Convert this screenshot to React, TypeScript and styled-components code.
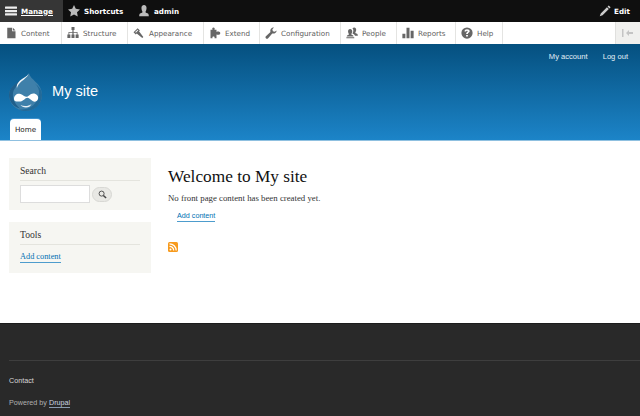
import React from "react";
import styled, { createGlobalStyle } from "styled-components";

const Global = createGlobalStyle`
  html, body { margin: 0; padding: 0; background: #fff; }
  body { width: 640px; height: 416px; overflow: hidden; font-family: "Liberation Sans", Arial, sans-serif; }
  a { text-decoration: none; }
`;

const Page = styled.div`
  width: 640px; height: 416px; display: flex; flex-direction: column; overflow: hidden;
`;

const TopBar = styled.div`
  height: 22px; background: #0f0f0f; display: flex; align-items: stretch; flex: none;
`;
const TopItem = styled.div<{ $active?: boolean; $w: number }>`
  width: ${p => p.$w}px; flex: none; display: flex; align-items: center; gap: 4px; padding-left: 5px; box-sizing: border-box;
  background: ${p => (p.$active ? "#363636" : "transparent")};
  color: #fff; font: bold 7.2px "DejaVu Sans", sans-serif;
  text-decoration: ${p => (p.$active ? "underline" : "none")};
`;
const TopSpacer = styled.div`flex: 1;`;
const TopEdit = styled(TopItem)`gap: 3px;`;

const AdminBar = styled.div`
  height: 22px; flex: none; background: #fff; display: flex; align-items: stretch;
`;
const AdminItem = styled.div<{ $w: number }>`
  width: ${p => p.$w}px; flex: none; box-sizing: border-box; border-right: 1px solid #e4e4e2;
  display: flex; align-items: center; gap: 4px; padding-left: 5px;
  color: #606060; font: 7.2px "DejaVu Sans", sans-serif; height: 22px;
`;
const AdminSpacer = styled.div`flex: 1;`;
const Toggle = styled.div`
  width: 24px; flex: none; display: flex; align-items: center; justify-content: center; background: #f0f0ee; border-left: 1px solid #e0e0de;
`;

const Header = styled.header`
  height: 96px; flex: none; background: linear-gradient(#05507f, #1c84c8); display: flex; flex-direction: column; color: #fff;
`;
const SecondaryNav = styled.nav`
  display: flex; justify-content: flex-end; gap: 15px; padding: 8px 12px 0 0; font-size: 7.6px; height: 10px; line-height: 10px; color: #e4eff7;
`;
const Branding = styled.div`
  display: flex; align-items: center; gap: 10px; padding: 10px 0 0 9px; height: 38px;
`;
const LogoMark = styled.svg`
  flex: none; margin-top: 2px;
`;
const SiteName = styled.div`
  font-size: 14.6px; color: #fff;
`;
const Tabs = styled.div`
  margin-top: auto; padding-left: 10px; display: flex;
`;
const Tab = styled.div`
  width: 31px; height: 21px; background: #fff; border-radius: 4px 4px 0 0; color: #222;
  font: 7.2px "DejaVu Sans", sans-serif; display: flex; align-items: center; justify-content: center;
  box-shadow: 0 -1px 0 #3d93cf;
`;

const Main = styled.main`
  flex: none; height: 183px; display: flex; align-items: flex-start; padding: 17px 0 0 9px; box-sizing: border-box;
  border-top: 1px solid #8fc0e0;
  font-family: "Liberation Serif", serif;
`;
const Sidebar = styled.aside`
  width: 142px; flex: none; display: flex; flex-direction: column; gap: 12px;
`;
const Block = styled.section<{ $h: number }>`
  background: #f6f6f2; height: ${p => p.$h}px; padding: 7px 11px 0 11px; box-sizing: border-box;
`;
const BlockTitle = styled.h2`
  margin: 0; font-weight: normal; font-size: 9.6px; line-height: 12px; color: #333; padding-bottom: 3px; border-bottom: 1px solid #e4e4de;
`;
const SearchRow = styled.div`
  display: flex; align-items: center; gap: 2px; margin-top: 4px;
`;
const SearchInput = styled.div`
  width: 70px; height: 18px; box-sizing: border-box; background: #fff; border: 1px solid #ddd;
`;
const SearchBtn = styled.div`
  width: 20px; height: 15px; border-radius: 8px; background: #e8e8e4; border: 1px solid #d8d8d4; box-sizing: border-box;
  display: flex; align-items: center; justify-content: center;
`;
const SideLink = styled.a`
  display: inline-block; margin-top: 7px; font-size: 8.3px; line-height: 10px; color: #0071b3; border-bottom: 1px solid #4d9ccd;
`;
const Content = styled.div`
  margin-left: 17px; display: flex; flex-direction: column; align-items: flex-start;
`;
const Title = styled.h1`
  margin: 8px 0 0; font-weight: normal; font-size: 17.3px; line-height: 22px; color: #111;
`;
const Lead = styled.p`
  margin: 5px 0 0; font-size: 8.8px; line-height: 10px; color: #333;
`;
const ActionLink = styled.a`
  margin: 8px 0 0 9px; font: 7.2px "Liberation Sans", sans-serif; line-height: 10px; color: #0071b3; border-bottom: 1px solid #4d9ccd;
`;
const Feed = styled.div`margin-top: 20px; line-height: 0;`;

const Footer = styled.footer`
  flex: 1; background: #292929; border-top: 1px solid #1c1c1c; padding: 36px 0 0 9px; font-size: 7.2px; color: #c0c0c0;
`;
const FooterRule = styled.div`
  height: 1px; background: #3e3e3e; margin-bottom: 15px;
`;
const FooterLine = styled.div`
  line-height: 9px; margin-bottom: 13px; color: #d8d8d8;
`;
const FooterMuted = styled(FooterLine)`color: #b0b0b0;`;
const FooterLink = styled.a`
  color: #c8d4e0; border-bottom: 1px solid #8a9cb0;
`;

const Ico = ({ d, w = 12, h = 12, fill = "#666", vb = "0 0 16 16" }: { d: string; w?: number; h?: number; fill?: string; vb?: string }) => (
  <svg width={w} height={h} viewBox={vb} fill={fill} style={{ flex: "none" }}><path d={d} /></svg>
);

const paths = {
  burger: "M1 2h14a1.200 1.200 0 0 1 0 3H1a1.200 1.200 0 0 1 0-3zM1 6.500h14a1.200 1.200 0 0 1 0 3H1a1.200 1.200 0 0 1 0-3zM1 11h14a1.200 1.200 0 0 1 0 3H1a1.200 1.200 0 0 1 0-3z",
  star: "M8 0l2.400 5.100 5.600.8-4 3.900 1 5.600L8 12.700 3 15.400l1-5.600-4-3.900 5.600-.8z",
  user: "M8 0c2.300 0 3.400 1.800 3.400 4S10.300 8.500 10 9.300c.1.800 1.200 1.200 2.500 1.600 1.200.4 1.900 1.200 1.900 4.100H1.600c0-2.900.7-3.700 1.900-4.100 1.300-.4 2.400-.8 2.500-1.600C5.700 8.500 4.600 6.200 4.600 4S5.700 0 8 0z",
  pencil: "M13 .5l2.500 2.500-1.600 1.600-2.500-2.500zM10.600 2.900l2.500 2.500-8.300 8.300-3.800 1.300 1.300-3.800z",
  page: "M3 1h6.500v4.500H14V15H3zM10.500 1L14 4.500h-3.500z",
  tree: "M6 0h4v4H8.800v2.500H14V10h1.500v4.500h-4V10H13V7.500H8.800V10H10v4.500H6V10h1.200V7.500H3V10h1.500v4.500h-4V10H2V6.500h5.200V4H6z",
  brush: "M6.200 1.500l3 3L8 5.800l5.800 7.500-1.500 1.500-7.300-6-1.300 1.300-3-3zM6.200 3.500L3 6.600l.9.900 3.200-3.100z",
  puzzle: "M2 3.500h2.700C3.900 1.500 4.700.5 6 .5s2.100 1 1.300 3H10v3c2-.8 5-.4 5 1.700s-3 2.500-5 1.700V15H7.300c.6-1.700-.2-2.400-1.300-2.400s-1.900.7-1.300 2.400H2z",
  wrench: "M15.500 4.500a4.300 4.300 0 0 1-5.800 4L4.200 15a1.900 1.900 0 0 1-3-2.600L7.300 6.500A4.300 4.300 0 0 1 12 .8L9.800 3.100l.7 2.500 2.500.7z",
  people: "M11 .5c1.700 0 2.600 1.400 2.600 3.100S12.600 7 12.300 7.600c.1.600.8.800 1.700 1.200.9.300 1.800.9 1.800 2.700H12c-.4-1.300-1.700-2-2.700-2.400-.5-.2-.6-.5-.6-.8.500-.7 1.100-2 1.100-3.500 0-1.200-.4-2.300-1.200-3C9.200 1 10 .5 11 .5zM5.500 2.500C7.400 2.500 8.300 4 8.300 5.700S7.400 9.100 7 9.700c.1.600 1 .9 2 1.300.7.300 1 .8 1 1.800H1c0-1 .3-1.500 1-1.800 1-.4 1.900-.7 2-1.300-.4-.6-1.300-2.300-1.300-4S3.600 2.500 5.500 2.500zM.5 13.500h10.500V15H.5z",
  bars: "M.5 9h4v6h-4zM6 1h4v14H6zM11.500 5h4v10h-4z",
  help: "M8 .5a7.500 7.500 0 1 0 0 15 7.500 7.500 0 0 0 0-15zm1.200 12.300H6.800v-2.200h2.400zm2-6.100c-.6 1-2 1.200-2 2.700H6.800c0-2.300 2.200-2.500 2.200-3.600 0-.5-.4-.9-1-.9-.7 0-1.200.5-1.200 1.200H4.700c0-1.900 1.400-3 3.300-3 2.200 0 3.600 1.200 3.600 2.700 0 .3-.1.600-.4.900z",
};

const adminItems = [
  { label: "Content", w: 62, icon: paths.page },
  { label: "Structure", w: 66, icon: paths.tree },
  { label: "Appearance", w: 76, icon: paths.brush },
  { label: "Extend", w: 56, icon: paths.puzzle },
  { label: "Configuration", w: 81, icon: paths.wrench },
  { label: "People", w: 56, icon: paths.people },
  { label: "Reports", w: 59, icon: paths.bars },
  { label: "Help", w: 47, icon: paths.help },
];

const DrupalLogo = () => (
  <LogoMark width="33" height="38" viewBox="0 0 33 38">
    <path d="M20 0c1 7 13 10 13 22a16.500 16 0 0 1-33 0C0 11 15 9 20 0z" fill="#3f80aa" />
    <path d="M0 22C0 13 9 9.500 14 6.500 13 10 5 13 4 20c-.8 6 2 11 7 15.500C5 34 0 29 0 22z" fill="#1f5f8c" />
    <path d="M33 22c0 9-7 16-16.500 16-2.500 0-4.500-.5-6.500-1.500 10 1 19-5 20-16 .5-4-1-7-4-10 4 3 7 6.500 7 11.500z" fill="#226a99" />
    <path d="M19.500 1c-1 3.500-6 6-9 9.500-1.500 1.700-2.500 3.500-2.500 5-1-3 .5-5.500 3-8 3-2.500 7-4 8.500-6.500z" fill="#f2f6f9" />
    <path d="M5 26c0-4 3.500-6 6.500-5 2.500.8 4 2.800 6 2.800s3.700-3.300 6.800-3.300c3 0 5.700 2.500 4.700 5.500-.8 2.300-3 3.200-5 2.300-2-1-3.500-3.500-5.500-3.500-2.500 0-4 3.800-8 3.800C7.500 28.600 5 28.500 5 26z" fill="#fff" />
    <path d="M11.500 32c3 1.500 8 1.500 11-1-1 2.500-3 3.500-5.500 3.500s-4.500-1-5.500-2.500z" fill="#e8f1f7" />
    <path d="M14.500 32c1.500-1 3.500-1 5 0-1.500.5-3.500.5-5 0z" fill="#3f80aa" />
  </LogoMark>
);

export default function App() {
  return (
    <Page>
      <Global />
      <TopBar>
        <TopItem $active $w={63}><Ico d={paths.burger} fill="#eee" />Manage</TopItem>
        <TopItem $w={70}><Ico d={paths.star} fill="#bbb" />Shortcuts</TopItem>
        <TopItem $w={66}><Ico d={paths.user} fill="#bbb" />admin</TopItem>
        <TopSpacer />
        <TopEdit $w={46}><Ico d={paths.pencil} fill="#ccc" />Edit</TopEdit>
      </TopBar>
      <AdminBar>
        {adminItems.map(i => (
          <AdminItem key={i.label} $w={i.w}><Ico d={i.icon} /> {i.label}</AdminItem>
        ))}
        <AdminSpacer />
        <Toggle>
          <svg width="12" height="8" viewBox="0 0 12 8" fill="#c4c4c4"><path d="M0 0h1.500v8H0zM4 4l3-3v2h4v2H7v2z" /></svg>
        </Toggle>
      </AdminBar>
      <Header>
        <SecondaryNav><span>My account</span><span>Log out</span></SecondaryNav>
        <Branding><DrupalLogo /><SiteName>My site</SiteName></Branding>
        <Tabs><Tab>Home</Tab></Tabs>
      </Header>
      <Main>
        <Sidebar>
          <Block $h={52}>
            <BlockTitle>Search</BlockTitle>
            <SearchRow>
              <SearchInput />
              <SearchBtn><svg width="9" height="9" viewBox="0 0 10 10" fill="none" stroke="#444"><circle cx="4" cy="4" r="2.800" /><path d="M6 6l3 3" strokeWidth="1.600" /></svg></SearchBtn>
            </SearchRow>
          </Block>
          <Block $h={51}>
            <BlockTitle>Tools</BlockTitle>
            <SideLink>Add content</SideLink>
          </Block>
        </Sidebar>
        <Content>
          <Title>Welcome to My site</Title>
          <Lead>No front page content has been created yet.</Lead>
          <ActionLink>Add content</ActionLink>
          <Feed>
            <svg width="10" height="10" viewBox="0 0 10 10">
              <rect width="10" height="10" rx="1.500" fill="#f79a1c" />
              <circle cx="2.500" cy="7.500" r="1" fill="#fff" />
              <path d="M1.500 4.300a4.200 4.200 0 0 1 4.200 4.200M1.500 1.800a6.700 6.700 0 0 1 6.700 6.700" stroke="#fff" strokeWidth="1.200" fill="none" />
            </svg>
          </Feed>
        </Content>
      </Main>
      <Footer>
        <FooterRule />
        <FooterLine>Contact</FooterLine>
        <FooterMuted>Powered by <FooterLink>Drupal</FooterLink></FooterMuted>
      </Footer>
    </Page>
  );
}
